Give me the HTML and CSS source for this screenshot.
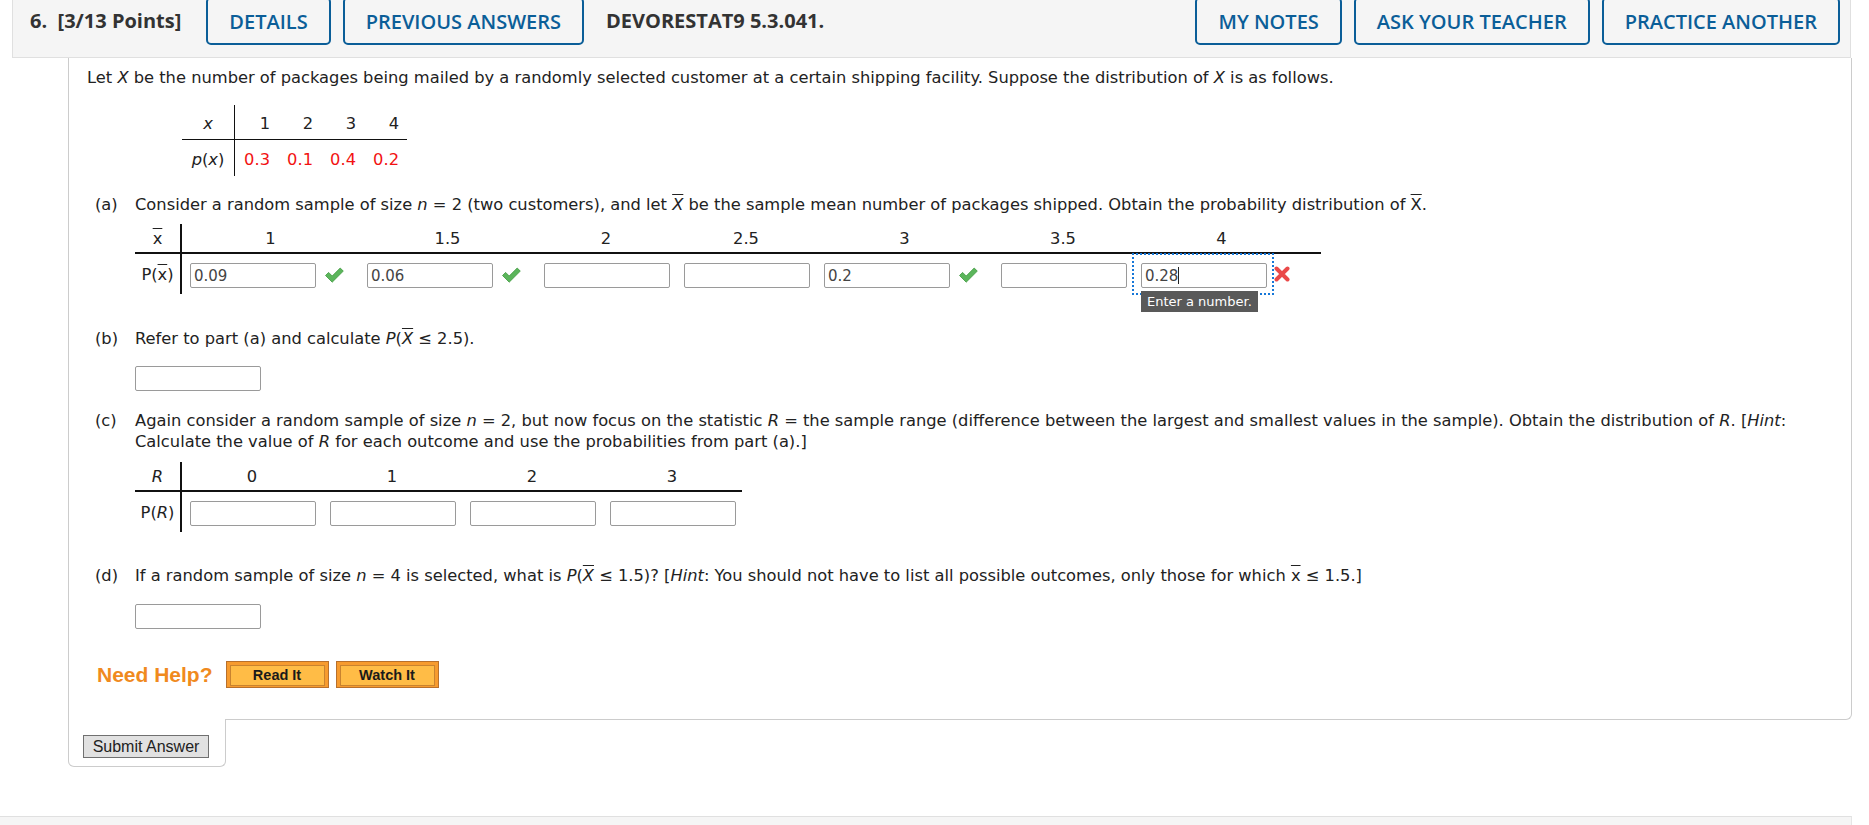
FILE: index.html
```html
<!DOCTYPE html>
<html lang="en">
<head>
<meta charset="utf-8">
<title>DEVORESTAT9 5.3.041</title>
<link rel="stylesheet" href="styles.css">
</head>
<body>
<header class="qhead">
  <span class="qnum">6.&nbsp; [3/13 Points]</span>
  <a class="hbtn">DETAILS</a>
  <a class="hbtn">PREVIOUS ANSWERS</a>
  <span class="qcode">DEVORESTAT9 5.3.041.</span>
  <span class="spacer"></span>
  <a class="hbtn">MY NOTES</a>
  <a class="hbtn">ASK YOUR TEACHER</a>
  <a class="hbtn">PRACTICE ANOTHER</a>
</header>

<div class="qbox">
  <p class="intro">Let <i>X</i> be the number of packages being mailed by a randomly selected customer at a certain shipping facility. Suppose the distribution of <i>X</i> is as follows.</p>

  <table class="dist">
    <tr class="hrow">
      <td class="lab"><i>x</i></td><td class="v">1</td><td class="v">2</td><td class="v">3</td><td class="v">4</td>
    </tr>
    <tr class="vrow">
      <td class="lab"><i>p</i>(<i>x</i>)</td><td class="v red">0.3</td><td class="v red">0.1</td><td class="v red">0.4</td><td class="v red">0.2</td>
    </tr>
  </table>

  <div class="part pa">
    <span class="plabel">(a)</span>
    <div class="pbody">
      <p class="ptext">Consider a random sample of size <i>n</i> = 2 (two customers), and let <i class="ovl">X</i> be the sample mean number of packages shipped. Obtain the probability distribution of <span class="ovl">X</span>.</p>
      <table class="ans">
        <tr class="hrow">
          <th class="lab"><span class="ovl">x</span></th>
          <th>1</th><th>1.5</th><th>2</th><th>2.5</th><th>3</th><th>3.5</th><th>4</th><th class="ext"></th>
        </tr>
        <tr>
          <td class="lab">P(<span class="ovl">x</span>)</td>
          <td><div class="cell"><span class="fld"><input class="inp" value="0.09"></span><span class="ico"><svg class="chk" viewBox="0 0 20 17" width="20" height="17"><path d="M1.5 9.5 L4.6 6.4 L8.2 10 L16.2 2 L19.3 5.1 L8.2 16.2 Z"/></svg></span></div></td>
          <td><div class="cell"><span class="fld"><input class="inp" value="0.06"></span><span class="ico"><svg class="chk" viewBox="0 0 20 17" width="20" height="17"><path d="M1.5 9.5 L4.6 6.4 L8.2 10 L16.2 2 L19.3 5.1 L8.2 16.2 Z"/></svg></span></div></td>
          <td><div class="cell"><span class="fld"><input class="inp" value=""></span></div></td>
          <td><div class="cell"><span class="fld"><input class="inp" value=""></span></div></td>
          <td><div class="cell"><span class="fld"><input class="inp" value="0.2"></span><span class="ico"><svg class="chk" viewBox="0 0 20 17" width="20" height="17"><path d="M1.5 9.5 L4.6 6.4 L8.2 10 L16.2 2 L19.3 5.1 L8.2 16.2 Z"/></svg></span></div></td>
          <td><div class="cell"><span class="fld"><input class="inp" value=""></span></div></td>
          <td><div class="cell"><span class="fld focus"><input class="inp" value="0.28"><span class="caret"></span><span class="tip">Enter a number.</span></span><span class="ico xi"><svg class="xmark" viewBox="0 0 16 16" width="16" height="16"><path d="M2.5 2.5 L13.5 13.5 M13.5 2.5 L2.5 13.5"/></svg></span></div></td>
          <td class="ext"></td>
        </tr>
      </table>
    </div>
  </div>

  <div class="part pb">
    <span class="plabel">(b)</span>
    <div class="pbody">
      <p class="ptext">Refer to part (a) and calculate <i>P</i>(<i class="ovl">X</i> ≤ 2.5).</p>
      <input class="inp solo" value="">
    </div>
  </div>

  <div class="part pc">
    <span class="plabel">(c)</span>
    <div class="pbody">
      <p class="ptext">Again consider a random sample of size <i>n</i> = 2, but now focus on the statistic <i>R</i> = the sample range (difference between the largest and smallest values in the sample). Obtain the distribution of <i>R</i>. [<i>Hint</i>:<br>Calculate the value of <i>R</i> for each outcome and use the probabilities from part (a).]</p>
      <table class="ans">
        <tr class="hrow">
          <th class="lab"><i>R</i></th>
          <th>0</th><th>1</th><th>2</th><th>3</th>
        </tr>
        <tr>
          <td class="lab">P(<i>R</i>)</td>
          <td><div class="cell"><span class="fld"><input class="inp" value=""></span></div></td>
          <td><div class="cell"><span class="fld"><input class="inp" value=""></span></div></td>
          <td><div class="cell"><span class="fld"><input class="inp" value=""></span></div></td>
          <td><div class="cell"><span class="fld"><input class="inp" value=""></span></div></td>
        </tr>
      </table>
    </div>
  </div>

  <div class="part pd">
    <span class="plabel">(d)</span>
    <div class="pbody">
      <p class="ptext">If a random sample of size <i>n</i> = 4 is selected, what is <i>P</i>(<i class="ovl">X</i> ≤ 1.5)? [<i>Hint</i>: You should not have to list all possible outcomes, only those for which <span class="ovl">x</span> ≤ 1.5.]</p>
      <input class="inp solo" value="">
    </div>
  </div>

  <div class="help">
    <span class="needhelp">Need Help?</span>
    <button class="obtn"><span>Read It</span></button>
    <button class="obtn"><span>Watch It</span></button>
  </div>
</div>

<div class="subtab">
  <button class="submit">Submit Answer</button>
</div>

<div class="foot"></div>
</body>
</html>
```

FILE: styles.css
```css
html, body {
  margin: 0;
  padding: 0;
  background: #ffffff;
}

body {
  font-family: "DejaVu Sans", Verdana, sans-serif;
  font-size: 16.3px;
  color: #222222;
  overflow: hidden;
}

/* ---------- header ---------- */
.qhead {
  display: flex;
  align-items: flex-start;
  gap: 12px;
  height: 57px;
  margin: 0 18px 0 12px;
  padding: 0 10px 0 17px;
  background: #f5f5f5;
  border: 1px solid #e0e0e0;
  border-top: 0;
  font-family: "Open Sans", "DejaVu Sans", sans-serif;
}

.qnum,
.qcode {
  font-weight: 700;
  font-size: 20px;
  line-height: 42px;
  color: #333333;
  white-space: nowrap;
}

.qnum { margin-right: 13px; }
.qcode { margin-left: 10px; }

.spacer { flex: 1; }

.hbtn {
  box-sizing: border-box;
  display: flex;
  align-items: center;
  height: 48px;
  margin-top: -3px;
  padding: 0 21px;
  border: 2px solid #0b5e98;
  border-radius: 5px;
  color: #0b5e98;
  font-size: 20px;
  font-weight: 600;
  white-space: nowrap;
  background: #f5f5f5;
}

/* ---------- question box ---------- */
.qbox {
  margin: 0 17px 0 68px;
  padding: 9px 18px 31px 18px;
  border: 1px solid #cccccc;
  border-top: 0;
  border-bottom-right-radius: 6px;
  background: #ffffff;
}

.intro,
.ptext {
  margin: 0;
  line-height: 21px;
}

i { font-style: italic; }

.ovl { text-decoration: overline; }

.red { color: #f21212; }

/* distribution table */
.dist {
  margin: 17px 0 0 95px;
  border-collapse: separate;
  border-spacing: 0;
}

.dist td {
  padding: 0;
  white-space: nowrap;
}

.dist .hrow td {
  height: 31px;
  padding-top: 3px;
  border-bottom: 1px solid #111111;
}

.dist .vrow td {
  height: 34px;
  padding-top: 2px;
}

.dist .lab {
  width: 52px;
  text-align: center;
  border-right: 1px solid #111111;
}

.dist .v {
  width: 35px;
  padding-right: 8px;
  text-align: right;
}

/* parts */
.part {
  display: flex;
  margin-left: 8px;
}

.plabel {
  flex: none;
  width: 40px;
  line-height: 21px;
}

.pbody { flex: 1; }

.pa { margin-top: 18px; }
.pb { margin-top: 34px; }
.pc { margin-top: 19px; }
.pd { margin-top: 33px; }

/* answer tables */
.ans {
  border-collapse: separate;
  border-spacing: 0;
  margin-top: 9px;
}

.pc .ans { margin-top: 10px; }

.ans th,
.ans td {
  padding: 0;
  font-weight: normal;
  white-space: nowrap;
}

.ans .hrow th {
  height: 28px;
  text-align: center;
  border-bottom: 2px solid #111111;
}

.ans .lab {
  width: 45px;
  text-align: center;
  border-right: 2px solid #111111;
}

.ans .ext { width: 11px; }

.cell {
  display: flex;
  align-items: center;
}

.fld {
  position: relative;
  display: block;
  padding: 9px 6px 6px 8px;
}

.fld.focus {
  outline: 2px dotted #1677d8;
  outline-offset: -1px;
}

.inp {
  display: block;
  box-sizing: border-box;
  width: 126px;
  height: 25px;
  margin: 0;
  padding: 0 3px;
  border: 1px solid #9a9a9a;
  border-radius: 2px;
  background: #ffffff;
  font-family: "DejaVu Sans", Verdana, sans-serif;
  font-size: 15px;
  color: #444444;
}

.solo { margin-top: 17px; }
.pd .solo { margin-top: 18px; }

.caret {
  position: absolute;
  left: 45px;
  top: 13px;
  width: 1px;
  height: 17px;
  background: #222222;
}

.tip {
  position: absolute;
  left: 8px;
  top: 37px;
  padding: 2px 6px;
  background: #595959;
  color: #ffffff;
  font-size: 13px;
  line-height: 17px;
  white-space: nowrap;
  z-index: 2;
}

.ico {
  display: flex;
  align-items: center;
  width: 37px;
  padding-left: 2px;
  box-sizing: border-box;
}

.ico.xi { padding-left: 1px; }

.chk path {
  fill: #5bb55b;
  stroke: #3f993f;
  stroke-width: 0.8;
  stroke-linejoin: round;
}

.xmark path {
  fill: none;
  stroke: #ea4a4a;
  stroke-width: 4;
  stroke-linecap: round;
}

/* help row */
.help {
  display: flex;
  align-items: center;
  margin: 32px 0 0 10px;
  height: 27px;
}

.needhelp {
  font-family: "Liberation Sans", Arial, sans-serif;
  font-weight: 700;
  font-size: 21px;
  color: #f08a1e;
  margin-right: 13px;
}

.obtn {
  box-sizing: border-box;
  width: 103px;
  height: 27px;
  margin: 0 7px 0 0;
  padding: 3px;
  border: 1px solid #b8702c;
  background: #f79b2e;
  cursor: pointer;
}

.obtn span {
  display: block;
  height: 19px;
  border: 1px solid #c9832f;
  background: #ffbc46;
  font-family: "Liberation Sans", Arial, sans-serif;
  font-weight: 700;
  font-size: 14.5px;
  line-height: 19px;
  color: #1a1a1a;
}

/* submit tab */
.subtab {
  box-sizing: border-box;
  width: 158px;
  margin: -1px 0 0 68px;
  padding: 16px 0 8px 14px;
  border: 1px solid #cccccc;
  border-top: 0;
  border-radius: 0 0 6px 6px;
  background: #ffffff;
}

.submit {
  display: block;
  box-sizing: border-box;
  width: 126px;
  height: 23px;
  margin: 0;
  padding: 0;
  border: 1px solid #707070;
  background: #e1e1e1;
  font-family: "Liberation Sans", Arial, sans-serif;
  font-size: 16px;
  color: #222222;
}

/* footer */
.foot {
  height: 10px;
  margin: 49px 17px 0 0;
  background: #f5f5f5;
  border-top: 1px solid #e0e0e0;
  border-right: 1px solid #e6e6e6;
}
```
